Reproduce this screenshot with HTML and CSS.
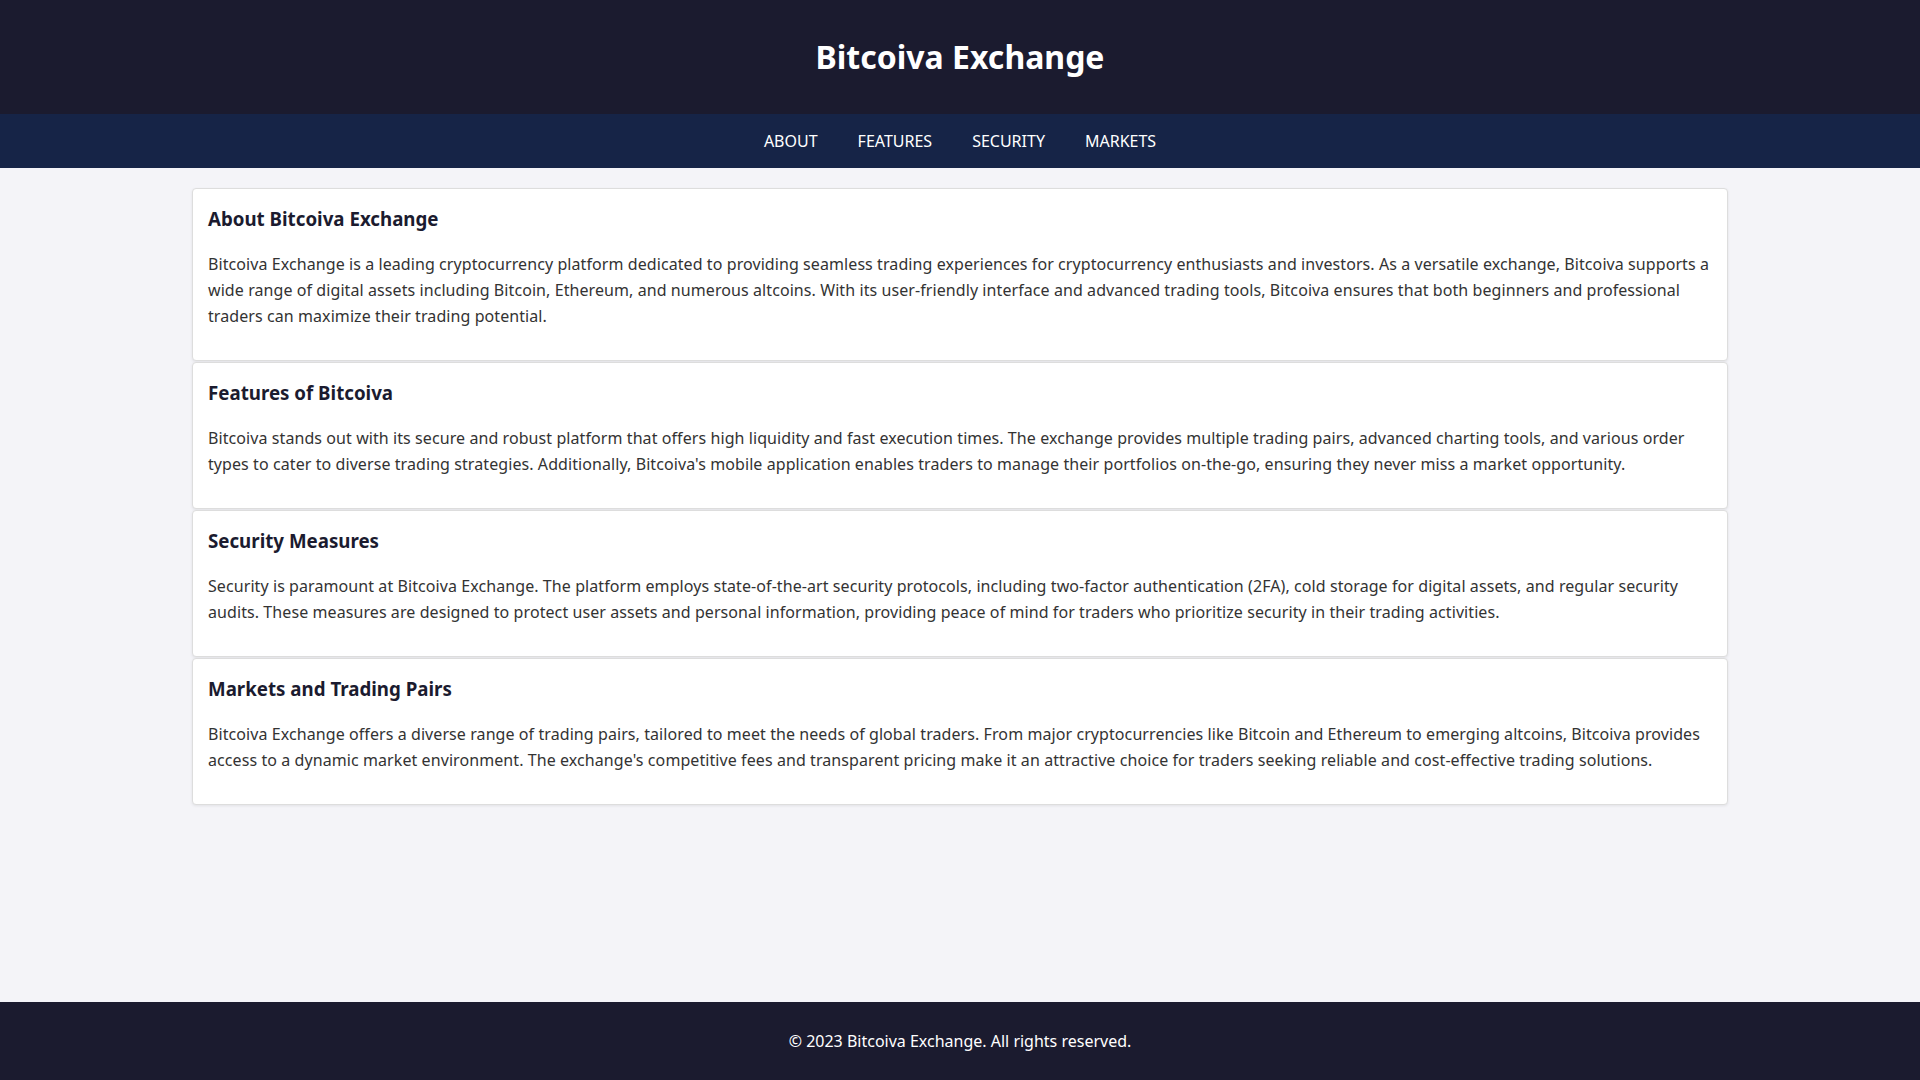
FILE: index.html
```html
<!DOCTYPE html>
<html lang="en">
<head>
	<meta charset="utf-8">
	<title>Bitcoiva Exchange</title>
	<link rel="stylesheet" href="styles.css">
</head>
<body>
	<header class="site-header">
		<h1>Bitcoiva Exchange</h1>
	</header>
	<nav class="site-nav">
		<a href="#about">About</a>
		<a href="#features">Features</a>
		<a href="#security">Security</a>
		<a href="#markets">Markets</a>
	</nav>
	<main class="content">
		<section class="card" id="about">
			<h3>About Bitcoiva Exchange</h3>
			<p>Bitcoiva Exchange is a leading cryptocurrency platform dedicated to providing seamless trading experiences for cryptocurrency enthusiasts and investors. As a versatile exchange, Bitcoiva supports a wide range of digital assets including Bitcoin, Ethereum, and numerous altcoins. With its user-friendly interface and advanced trading tools, Bitcoiva ensures that both beginners and professional traders can maximize their trading potential.</p>
		</section>
		<section class="card" id="features">
			<h3>Features of Bitcoiva</h3>
			<p>Bitcoiva stands out with its secure and robust platform that offers high liquidity and fast execution times. The exchange provides multiple trading pairs, advanced charting tools, and various order types to cater to diverse trading strategies. Additionally, Bitcoiva's mobile application enables traders to manage their portfolios on-the-go, ensuring they never miss a market opportunity.</p>
		</section>
		<section class="card" id="security">
			<h3>Security Measures</h3>
			<p>Security is paramount at Bitcoiva Exchange. The platform employs state-of-the-art security protocols, including two-factor authentication (2FA), cold storage for digital assets, and regular security audits. These measures are designed to protect user assets and personal information, providing peace of mind for traders who prioritize security in their trading activities.</p>
		</section>
		<section class="card" id="markets">
			<h3>Markets and Trading Pairs</h3>
			<p>Bitcoiva Exchange offers a diverse range of trading pairs, tailored to meet the needs of global traders. From major cryptocurrencies like Bitcoin and Ethereum to emerging altcoins, Bitcoiva provides access to a dynamic market environment. The exchange's competitive fees and transparent pricing make it an attractive choice for traders seeking reliable and cost-effective trading solutions.</p>
		</section>
	</main>
	<footer class="site-footer">
		<p>&copy; 2023 Bitcoiva Exchange. All rights reserved.</p>
	</footer>
</body>
</html>
```

FILE: styles.css
```css
html, body {
	height: 100%;
}
body {
	margin: 0;
	display: flex;
	flex-direction: column;
	font-family: "Noto Sans", "Open Sans", sans-serif;
	background-color: #f4f4f8;
	color: #333;
}

.site-header {
	background-color: #1b1b2f;
	color: #fff;
	height: 114px;
	display: flex;
	align-items: center;
	justify-content: center;
	padding-bottom: 2px;
	box-sizing: border-box;
}
.site-header h1 {
	margin: 0;
	font-size: 32px;
	font-weight: 700;
}

.site-nav {
	background-color: #162447;
	height: 54px;
	display: flex;
	align-items: center;
	justify-content: center;
	padding-bottom: 1px;
	box-sizing: border-box;
}
.site-nav a {
	color: #fff;
	text-decoration: none;
	text-transform: uppercase;
	font-size: 16px;
	padding: 0 20px;
}

.content {
	flex: 1;
	width: 80%;
	margin: 20px auto 0;
}
.card {
	background-color: #fff;
	border: 1px solid #ddd;
	border-radius: 4px;
	box-shadow: 0 1px 3px rgba(0, 0, 0, 0.08);
	padding: 16px 15px 0;
	margin-bottom: 1px;
}
.card h3 {
	margin: 0 0 19px;
	font-size: 18.72px;
	font-weight: 700;
	color: #1b1b2f;
	line-height: 27px;
}
.card p {
	margin: 0;
	font-size: 16px;
	line-height: 26px;
	letter-spacing: 0.08px;
	padding-bottom: 31px;
}

.site-footer {
	background-color: #1b1b2f;
	color: #fff;
	height: 78px;
	display: flex;
	align-items: center;
	justify-content: center;
}
.site-footer p {
	margin: 0;
	font-size: 16px;
}
```
